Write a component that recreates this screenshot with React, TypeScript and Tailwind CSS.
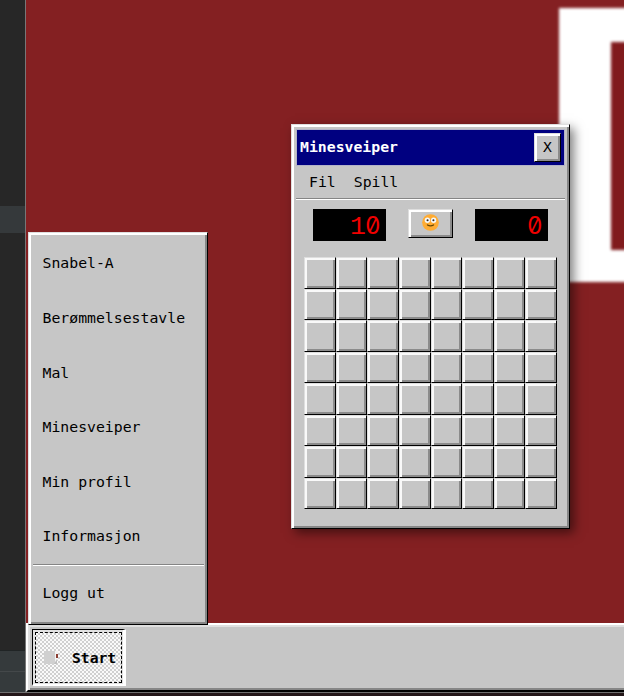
import React from "react";

const menuItems = ["Snabel-A", "Berømmelsestavle", "Mal", "Minesveiper", "Min profil", "Informasjon"];

function Smiley() {
  return (
    <svg width="17" height="17" viewBox="0 0 18 18" className="-mt-[3px]">
      <circle cx="9" cy="9" r="8.8" fill="#ffac33" />
      <circle cx="5.7" cy="6.6" r="2.8" fill="#f5f8fa" />
      <circle cx="12.3" cy="6.6" r="2.8" fill="#f5f8fa" />
      <circle cx="5.9" cy="6.6" r="1.1" fill="#3a2a1c" />
      <circle cx="12.1" cy="6.6" r="1.1" fill="#3a2a1c" />
      <path d="M5.8 11.6Q9 13.6 12.2 11.6" fill="none" stroke="#664500" strokeWidth="1.4" strokeLinecap="round" />
    </svg>
  );
}

function Display({ value }: { value: string }) {
  return (
    <div className="flex h-8 w-[73px] items-center justify-end bg-black pr-[6px] pt-[2px] text-[#f00000]">
      {value.split("").map((digit, i) =>
        digit === "0" ? (
          <span key={i} className="w-[15px] text-center font-['Inter',sans-serif] text-[24px] leading-8 [font-feature-settings:'zero','tnum']">0</span>
        ) : (
          <span key={i} className="w-[15px] pt-px text-center font-['Liberation_Mono',monospace] text-[26.5px] leading-8">{digit}</span>
        )
      )}
    </div>
  );
}

function Cell() {
  return (
    <div className="border-b border-l border-r border-t border-b-black border-l-[#dedede] border-r-black border-t-[#dedede] bg-[#c6c6c6] shadow-[inset_2px_2px_#f9f9f9,inset_-2px_-2px_#8b8b8b]" />
  );
}

function Minesweeper() {
  return (
    <div className="absolute left-[291px] top-[124px] flex h-[405px] w-[279px] flex-col border border-b-black border-l-[#dfdfdf] border-r-black border-t-[#dfdfdf] bg-[#c6c6c6] px-1 pt-1 shadow-[inset_2px_2px_#fff,inset_-2px_-2px_#868686,4px_4px_10px_rgba(0,0,0,0.5)]">
      <div className="flex h-[37px] w-[269px] shrink-0 items-center justify-between border border-[#b3b3c8] bg-[#000080] pl-[3px] pr-[3px]">
        <span className="-mt-px text-[14.8px] font-bold text-white">Minesveiper</span>
        <div className="flex h-[29px] w-[27px] items-center justify-center border border-b-black border-l-[#dedede] border-r-black border-t-[#dedede] bg-[#c6c6c6] pb-px text-[14.7px] shadow-[inset_2px_2px_#fff,inset_-2px_-2px_#8b8b8b]">X</div>
      </div>
      <div className="flex h-[34px] w-[269px] shrink-0 items-center gap-[18px] border-b border-white pb-[2px] pl-[13px] shadow-[inset_0_-1px_#858585]">
        <span>Fil</span>
        <span>Spill</span>
      </div>
      <div className="ml-[17px] mt-[9px] flex w-[235px] shrink-0 items-start">
        <Display value="10" />
        <div className="ml-[22px] mr-[22px] flex h-[29px] w-[45px] items-center justify-center border border-b-black border-l-[#dedede] border-r-black border-t-[#dedede] bg-[#c6c6c6] shadow-[inset_2px_2px_#fff,inset_-2px_-2px_#8b8b8b]">
          <Smiley />
        </div>
        <Display value="0" />
      </div>
      <div className="ml-2 mt-4 grid h-[252px] w-[253px] shrink-0 grid-cols-8 grid-rows-8">
        {Array.from({ length: 64 }, (_, i) => <Cell key={i} />)}
      </div>
    </div>
  );
}

function StartMenu() {
  return (
    <div className="absolute left-[28px] top-[232px] flex h-[393px] w-[180px] flex-col border border-b-black border-l-[#dfdfdf] border-r-black border-t-[#dfdfdf] bg-[#c6c6c6] px-1 pt-[3.2px] shadow-[inset_2px_2px_#fff,inset_-2px_-2px_#868686]">
      {menuItems.map((item) => (
        <div key={item} className="flex h-[54.6px] shrink-0 items-center pl-[9.5px]">{item}</div>
      ))}
      <div className="h-[2px] w-[171px] shrink-0 border-b border-t border-b-white border-t-[#858585]" />
      <div className="flex h-[55px] shrink-0 items-center pl-[9.5px]">Logg ut</div>
    </div>
  );
}

function Taskbar() {
  return (
    <div className="flex h-[69px] border-b-2 border-l-2 border-t-2 border-b-black border-l-white border-t-white bg-[#c6c6c6] pl-1 pt-1 shadow-[inset_2px_2px_#dfdfdf,inset_0_-2px_#868686]">
      <div className="h-[57px] w-[94px] border-b-2 border-l border-r-[3px] border-t border-b-white border-l-black border-r-white border-t-black bg-[#e2e2e2] pb-px pl-[2px] pr-px pt-[2px]">
        <div className="flex h-full items-center border border-dashed border-black bg-[repeating-conic-gradient(#d0d0d0_0_25%,#fafafa_0_50%)] bg-[length:4px_4px] pl-2">
          <svg width="18" height="16" viewBox="0 0 18 16">
            <rect x="0" y="1" width="11" height="13" fill="#d0d0d0" />
            <path d="M11 1h3v8l-3 4z" fill="#f4f4f4" />
            <path d="M10 14l3-5v5z" fill="#c0c0c0" />
            <rect x="12" y="4" width="2" height="4" fill="#8c3d32" />
          </svg>
          <span className="ml-[10px] whitespace-nowrap text-[14.7px] font-bold">Start</span>
        </div>
      </div>
    </div>
  );
}

export default function App() {
  return (
    <div className="relative flex h-[696px] w-[624px] flex-col overflow-hidden bg-[#241719] font-['DejaVu_Sans_Mono',monospace] text-[14.8px] leading-5 text-black">
      <div className="flex h-[692px]">
        <div className="flex w-[25px] flex-col bg-[#272727]">
          <div className="mt-[206px] h-[27px] bg-[#35393b]" />
          <div className="mt-auto h-[21px] border-t border-[#202425] bg-[#353a3c]" />
          <div className="h-[21px] border-t border-[#44484a] bg-[#353a3c]" />
        </div>
        <div className="w-px bg-[#777777]" />
        <div className="flex w-[598px] flex-col">
          <div className="relative h-[623px] overflow-hidden bg-[#842022]">
            <div className="absolute left-[533px] top-[8px] h-[274px] w-[120px] border-b-[32px] border-l-[52px] border-t-[34px] border-white bg-[#801b1d] blur-[1.8px]" />
          </div>
          <Taskbar />
        </div>
      </div>
      <div className="h-1 border-t border-[#707070]" />
      <StartMenu />
      <Minesweeper />
    </div>
  );
}
